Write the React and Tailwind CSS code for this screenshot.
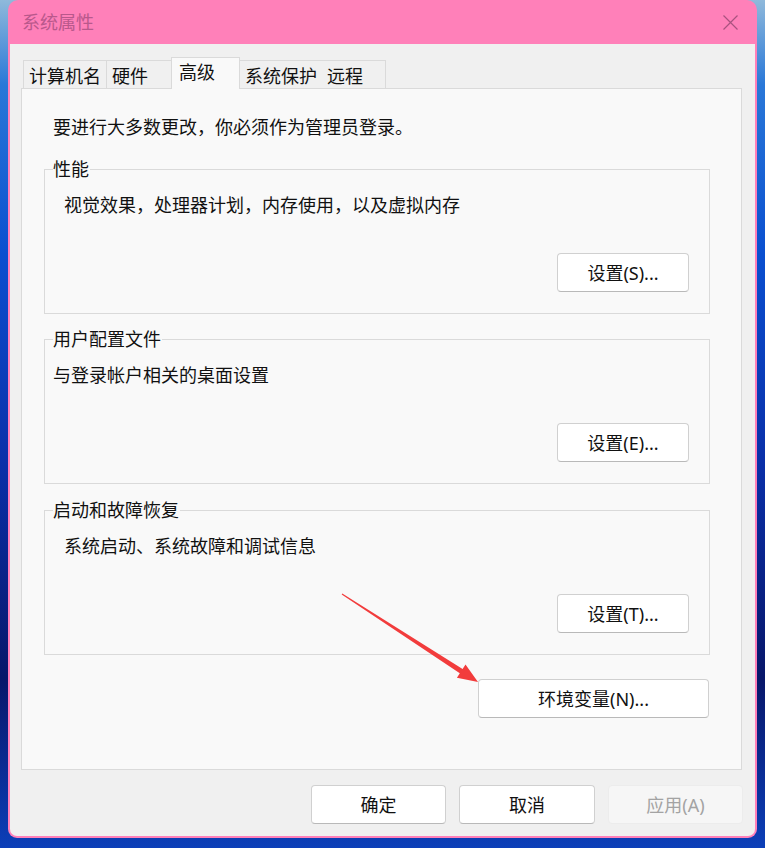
import React from "react";

const groups = [
  { title: "性能", desc: "视觉效果，处理器计划，内存使用，以及虚拟内存", pad: "pl-[19px]", btn: "设置(S)..." },
  { title: "用户配置文件", desc: "与登录帐户相关的桌面设置", pad: "pl-[8px]", btn: "设置(E)..." },
  { title: "启动和故障恢复", desc: "系统启动、系统故障和调试信息", pad: "pl-[19px]", btn: "设置(T)..." },
];

const tabs = [
  { label: "计算机名", w: "w-[83px]" },
  { label: "硬件", w: "w-[65px]" },
  { label: "高级", w: "w-[69px]", active: true },
  { label: "系统保护", w: "w-[82px]" },
  { label: "远程", w: "w-[64px]" },
];

function Button({ children, className = "", disabled }) {
  return (
    <button
      className={
        "flex h-[39px] items-center justify-center rounded-[4px] border text-[18px] leading-[24px] " +
        (disabled
          ? "border-[#ececec] bg-[#f6f6f6] text-[#a3a3a3] "
          : "border-[#d0d0d0] border-b-[#b9b9b9] bg-white text-[#111] ") +
        className
      }
    >
      {children}
    </button>
  );
}

function GroupBox({ group, className = "" }) {
  return (
    <div className={"relative flex h-[145px] flex-col border border-[#dadada] " + className}>
      <span className="absolute -top-[13px] left-[8px] bg-[#f9f9f9] pr-[1px] text-[18px] leading-[24px] text-[#111]">
        {group.title}
      </span>
      <p className={"pt-[23px] text-[18px] leading-[24px] text-[#111] " + group.pad}>{group.desc}</p>
      <Button className="mt-[36px] mr-[20px] w-[132px] self-end">{group.btn}</Button>
    </div>
  );
}

export default function App() {
  return (
    <div className="relative h-[848px] w-[765px] overflow-hidden bg-[linear-gradient(180deg,#8fb9db_0%,#2a78d8_10%,#0a4fd0_30%,#0a2fa8_55%,#08176a_80%,#0c3fb8_100%)] font-['Noto_Sans','Noto_Sans_CJK_SC',sans-serif]">
      <div className="ml-[8px] flex h-[838px] w-[749px] flex-col rounded-t-[10px] rounded-b-[9px] bg-[#ff80b9]">
        {/* title bar */}
        <div className="flex h-[44px] shrink-0 items-center justify-between pl-[14px] pr-[19px]">
          <span className="text-[18px] leading-[24px] text-[#b9588c]">系统属性</span>
          <svg width="15" height="15" viewBox="0 0 15 15" className="text-[#a9527f]">
            <path d="M0.5 0.5 L14.5 14.5 M14.5 0.5 L0.5 14.5" stroke="currentColor" strokeWidth="1.2" />
          </svg>
        </div>

        <div className="mx-[2px] mb-[2px] flex flex-1 flex-col rounded-b-[7px] bg-[#f0f0f0]">
          {/* tabs */}
          <div className="relative z-10 -mb-[1px] mt-[13px] flex h-[32px] items-end pl-[13px]">
            {tabs.map((t, i) =>
              t.active ? (
                <div
                  key={i}
                  className={"h-[32px] border border-b-0 border-[#dadada] bg-[#f9f9f9] pl-[7px] pt-[2px] text-[18px] leading-[24px] text-[#111] " + t.w}
                >
                  {t.label}
                </div>
              ) : (
                <div
                  key={i}
                  className={
                    "h-[29px] border-t border-[#dadada] pl-[5px] pt-[3px] text-[18px] leading-[24px] text-[#111] " +
                    t.w +
                    (i === 0 || i === 1 ? " border-l" : "") +
                    (i === tabs.length - 1 ? " border-r" : "")
                  }
                >
                  {t.label}
                </div>
              )
            )}
          </div>

          {/* tab panel */}
          <div className="ml-[11px] mr-[13px] flex h-[682px] flex-col border border-[#dadada] bg-[#f9f9f9] pl-[22px] pr-[31px]">
            <p className="pl-[9px] pt-[26px] text-[18px] leading-[24px] text-[#111]">
              要进行大多数更改，你必须作为管理员登录。
            </p>
            <GroupBox group={groups[0]} className="mt-[30px]" />
            <GroupBox group={groups[1]} className="mt-[25px]" />
            <GroupBox group={groups[2]} className="mt-[26px]" />
            <Button className="mt-[24px] mr-[1px] w-[231px] self-end">环境变量(N)...</Button>
          </div>

          {/* dialog buttons */}
          <div className="mt-[15px] mr-[12px] flex justify-end gap-[13px]">
            <Button className="w-[135px]">确定</Button>
            <Button className="w-[136px]">取消</Button>
            <Button className="w-[135px]" disabled>
              应用(A)
            </Button>
          </div>
        </div>
      </div>

      {/* annotation arrow */}
      <svg className="pointer-events-none absolute left-0 top-0" width="765" height="848">
        <polygon
          points="342.3,593.5 462.6,669 465.5,664.4 478,682 456.9,677.8 459.8,673.2 341.7,594.5"
          fill="#f23c3c"
        />
      </svg>
    </div>
  );
}
